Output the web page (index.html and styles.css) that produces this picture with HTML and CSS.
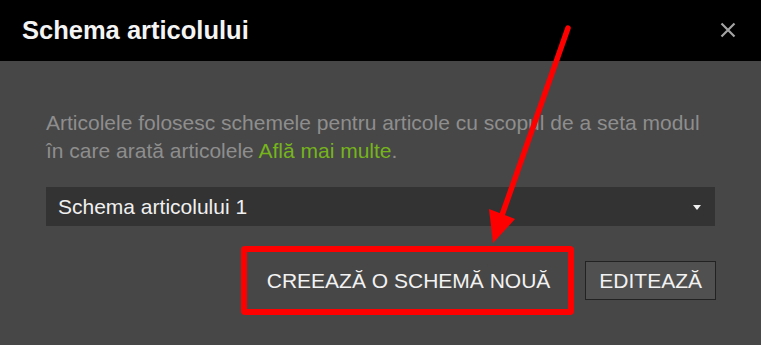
FILE: index.html
```html
<!DOCTYPE html>
<html lang="ro">

<head>
    <meta charset="UTF-8">
    <meta name="viewport" content="width=device-width, initial-scale=1.0">
    <title>Schema articolului</title>
    <link rel="stylesheet" href="styles.css">
</head>

<body>
    <div class="dialog">
        <div class="dialog-header">
            <h2 class="dialog-title">Schema articolului</h2>
            <button class="close" aria-label="Închide">
                <svg width="16" height="16" viewBox="0 0 16 16">
                    <path d="M1.5 1.5 L14.5 14.5 M14.5 1.5 L1.5 14.5" stroke="#a3a3a3" stroke-width="2.2" fill="none"/>
                </svg>
            </button>
        </div>
        <div class="dialog-body">
            <p class="intro">Articolele folosesc schemele pentru articole cu scopul de a seta modul în care arată articolele <a href="#">Află mai multe</a>.</p>
            <div class="select">
                <span>Schema articolului 1</span>
                <span class="caret"></span>
            </div>
            <div class="actions">
                <button class="btn btn-flat">CREEAZĂ O SCHEMĂ NOUĂ<span class="highlight"></span></button>
                <button class="btn">EDITEAZĂ</button>
            </div>
        </div>
    </div>

    <!-- adnotare: săgeata roșie -->
    <svg class="annotation" width="761" height="345" viewBox="0 0 761 345">
        <line x1="568" y1="28" x2="501" y2="218" stroke="#ff0000" stroke-width="5.5" stroke-linecap="round"/>
        <polygon points="489,209 515,219 493,243" fill="#ff0000"/>
    </svg>
</body>

</html>
```

FILE: styles.css
```css
html,
body {
    height: 100%;
    margin: 0;
    overflow: hidden;
}

body {
    background: #474747;
    font-family: "Liberation Sans", Arial, sans-serif;
}

.dialog {
    height: 100%;
}

.dialog-header {
    height: 61px;
    background: #000;
    display: flex;
    align-items: center;
    justify-content: space-between;
    padding: 0 25px 0 22px;
}

.dialog-title {
    margin: 0;
    color: #f4f4f4;
    font-size: 25.5px;
    font-weight: bold;
    line-height: 1;
    padding-top: 1px;
}

.close {
    background: none;
    border: none;
    padding: 0;
    width: 16px;
    height: 16px;
    margin-top: -2px;
    cursor: pointer;
}

.close svg {
    display: block;
}

.dialog-body {
    padding: 48px 46px 0;
}

.intro {
    margin: 0;
    max-width: 662px;
    color: #8e8e8e;
    font-size: 21px;
    line-height: 28px;
}

.intro a {
    color: #76b41c;
    text-decoration: none;
}

.select {
    margin-top: 22px;
    height: 39px;
    background: #333;
    color: #f0f0f0;
    font-size: 21px;
    line-height: 39px;
    padding: 0 14px 0 12px;
    display: flex;
    justify-content: space-between;
    align-items: center;
}

.caret {
    width: 0;
    height: 0;
    border-left: 4px solid transparent;
    border-right: 4px solid transparent;
    border-top: 5px solid #f0f0f0;
    margin-top: 1px;
}

.actions {
    margin-top: 35px;
    margin-right: -1px;
    display: flex;
    justify-content: flex-end;
    gap: 21px;
}

.btn {
    position: relative;
    height: 39px;
    padding: 0 13px;
    background: #505050;
    border: 1px solid #222;
    color: #f2f2f2;
    font-family: inherit;
    font-size: 21px;
    line-height: 37px;
    cursor: pointer;
}

.btn-flat {
    background: transparent;
    border-color: transparent;
}

/* adnotare: chenarul roșu din jurul butonului */
.highlight {
    position: absolute;
    left: -13px;
    top: -16px;
    right: -11px;
    bottom: -16px;
    border: 6px solid #ff0000;
    border-radius: 4px;
    pointer-events: none;
}

.annotation {
    position: absolute;
    left: 0;
    top: 0;
    pointer-events: none;
}
```
